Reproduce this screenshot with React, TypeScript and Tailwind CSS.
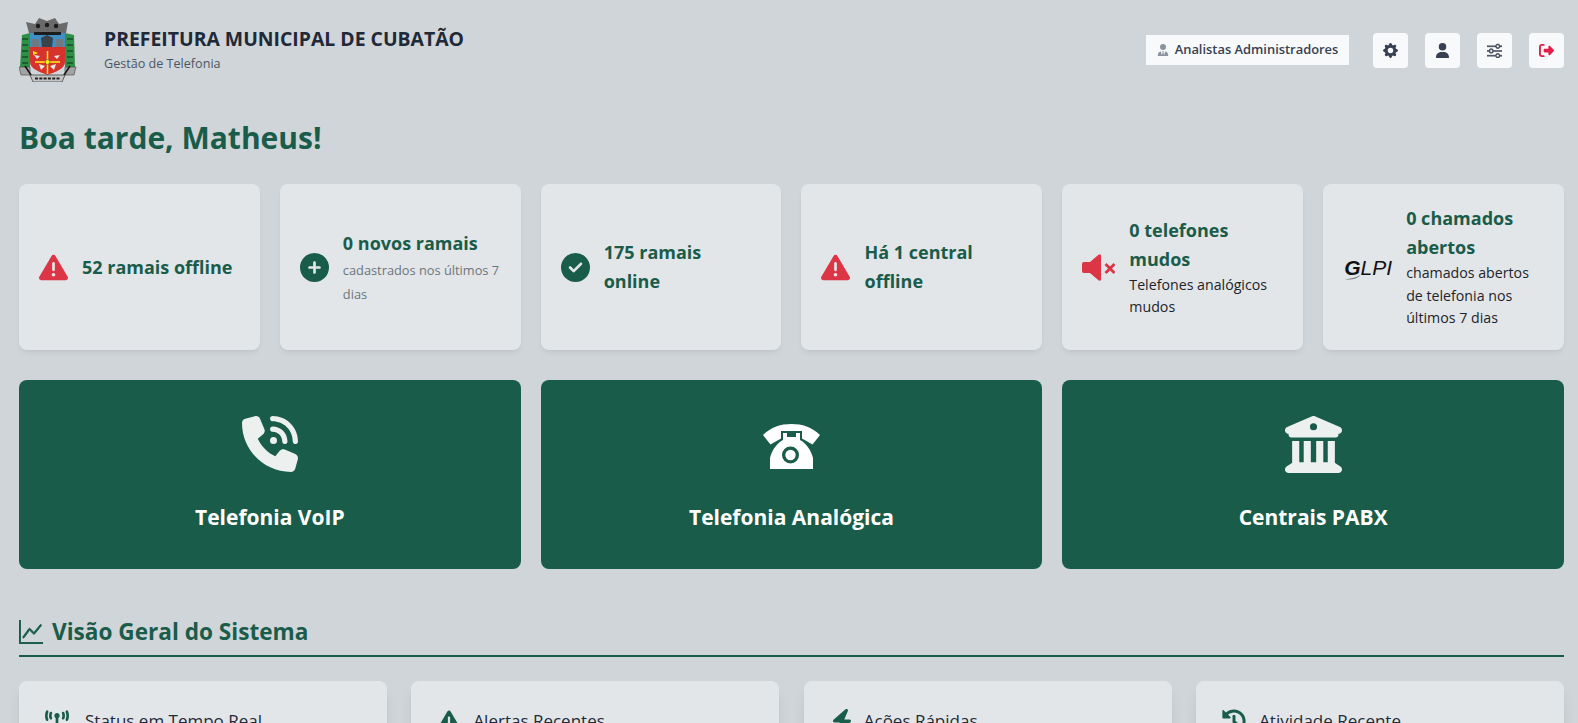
import { FaHistory } from "react-icons/fa";
import {
  FaBolt,
  FaBuildingColumns,
  FaCircleCheck,
  FaCirclePlus,
  FaPhoneVolume,
  FaRightFromBracket,
  FaTowerBroadcast,
  FaTriangleExclamation,
  FaUser,
  FaUserTie,
} from "react-icons/fa6";
import { BsGearFill, BsGraphUp, BsSliders } from "react-icons/bs";

function Brasao() {
  return (
    <svg viewBox="0 0 60 64" className="w-[60px] h-[64px] shrink-0">
      <path d="M10 15 L7 4 L16 6 L20 0 L28 3 L36 0 L40 6 L49 4 L47 15 Z" fill="#6a6a6a" />
      <circle cx="19" cy="8" r="2.200" fill="#1c1c1c" />
      <circle cx="28" cy="7" r="2.200" fill="#1c1c1c" />
      <circle cx="37" cy="8" r="2.200" fill="#1c1c1c" />
      <path d="M3 17 L11 15 L11 49 L1 49 Z" fill="#2f8f46" />
      <path d="M55 17 L46 15 L46 49 L56 49 Z" fill="#2f8f46" />
      <path d="M3 21 L9 21 M3 27 L9 27 M3 33 L9 33 M3 39 L9 39 M3 45 L9 45 M48 21 L54 21 M48 27 L54 27 M48 33 L54 33 M48 39 L54 39 M48 45 L54 45" stroke="#14502a" strokeWidth="1.600" />
      <path d="M11 15 H46 V30 H11 Z" fill="#3f8fc4" />
      <rect x="15" y="14" width="27" height="3" fill="#1c1c1c" />
      <path d="M22 20 L28 17 L34 20 L33 29 L23 29 Z" fill="#39434c" />
      <path d="M13 21 h7 v8 h-7 Z M37 21 h7 v8 h-7 Z" fill="#6d7a82" />
      <path d="M11 29 H46 V44 C46 51 36 54 28.500 57 C21 54 11 51 11 44 Z" fill="#d8322c" />
      <path d="M20 46 l6 2 l-4 4 Z M37 46 l-6 2 l4 4 Z M15 37 l6 1 l-3 3 Z M41 37 l-6 1 l3 3 Z" fill="#e6e6e6" />
      <path d="M28.500 33 V56 M16 44 H41" stroke="#ffef1a" strokeWidth="1.500" />
      <circle cx="28.500" cy="44" r="2.400" fill="#ffef1a" stroke="#222" strokeWidth="0.500" />
      <path d="M14 33 l5 2 l-5 2 Z" fill="#ffef1a" />
      <path d="M0 49 H11 V57 H2 Z M57 49 H46 V57 H55 Z" fill="#a3a3a3" stroke="#444" strokeWidth="0.600" />
      <path d="M6 48 L14 60 M51 48 L43 60" stroke="#111" strokeWidth="1.500" />
      <path d="M11 57 H46 L43 64 H14 Z" fill="#c4c4c4" stroke="#333" strokeWidth="0.700" />
      <path d="M16 60.500 H41" stroke="#222" strokeWidth="2" strokeDasharray="3 1.300" />
    </svg>
  );
}

function Rotary() {
  return (
    <svg viewBox="0 0 57 45" className="w-[57px] h-[45px] mt-[4px]" fill="#ffffff">
      <path d="M0 11 C8 3 18 0 28.500 0 C39 0 49 3 57 11 L49.500 20.500 L39 14.500 V7 H18 V14.500 L7.500 20.500 Z" />
      <path
        fillRule="evenodd"
        d="M20 9 H24 V13 H33 V9 H37 V16 C43 19 48 26 50 34 V45 H7 V34 C9 26 14 19 20 16 Z M27.500 22.500 A8.500 8.500 0 1 0 27.500 39.500 A8.500 8.500 0 1 0 27.500 22.500 Z"
      />
      <circle cx="27.500" cy="31" r="5.200" />
    </svg>
  );
}

function Mudo() {
  return (
    <svg viewBox="0 0 33 27" className="w-[33px] h-[27px] mr-[14px] shrink-0">
      <path d="M0 10 Q0 8 2 8 H8 L16.500 0.800 Q19 -0.800 19 2 V25 Q19 27.800 16.500 26.200 L8 19 H2 Q0 19 0 17 Z" fill="#dc3545" />
      <path d="M23.500 10 L32.500 19 M32.500 10 L23.500 19" stroke="#dc3545" strokeWidth="2.800" />
    </svg>
  );
}

function Glpi() {
  return (
    <div className="relative w-[50px] shrink-0 mr-[13px] text-center font-['Liberation_Sans',sans-serif] italic text-[21px] leading-none text-[#111]">
      <span className="font-bold">G</span>LPI
      <svg viewBox="0 0 24 6" className="absolute left-[1px] top-[18px] w-[20px] h-[5px]">
        <path d="M1 5 C8 5 14 3 20 0 C16 5 8 6 1 5 Z" fill="#777" />
      </svg>
    </div>
  );
}

const stats = [
  { icon: <FaTriangleExclamation className="text-[#dc3545] text-[29px] mr-[14px] shrink-0" />, title: "52 ramais offline" },
  {
    icon: <FaCirclePlus className="text-[#1a5c4a] text-[29px] mr-[14px] shrink-0" />,
    title: "0 novos ramais",
    sub: "cadastrados nos últimos 7 dias",
    subClass: "text-[#6c757d] text-[12.800px] leading-[24px]",
  },
  { icon: <FaCircleCheck className="text-[#1a5c4a] text-[29px] mr-[14px] shrink-0" />, title: "175 ramais online" },
  { icon: <FaTriangleExclamation className="text-[#dc3545] text-[29px] mr-[14px] shrink-0" />, title: "Há 1 central offline" },
  {
    icon: <Mudo />,
    title: "0 telefones mudos",
    sub: "Telefones analógicos mudos",
    subClass: "text-[#212529] text-[14.200px] leading-[22.500px]",
  },
  {
    icon: <Glpi />,
    title: "0 chamados abertos",
    sub: "chamados abertos de telefonia nos últimos 7 dias",
    subClass: "text-[#212529] text-[14.200px] leading-[22.500px]",
  },
];

const modules = [
  { label: "Telefonia VoIP", icon: <FaPhoneVolume className="text-[56px] text-[#ecf0ef]" /> },
  { label: "Telefonia Analógica", icon: <Rotary /> },
  { label: "Centrais PABX", icon: <FaBuildingColumns className="text-[57px] text-[#ecf0ef]" /> },
];

const overview = [
  { label: "Status em Tempo Real", gap: "gap-[16px]", icon: <FaTowerBroadcast className="text-[24px] text-[#1a5c4a]" /> },
  { label: "Alertas Recentes", gap: "gap-[12px]", icon: <FaTriangleExclamation className="text-[24px] text-[#1a5c4a]" /> },
  { label: "Ações Rápidas", gap: "gap-[10px]", icon: <FaBolt className="text-[24px] text-[#1a5c4a]" /> },
  { label: "Atividade Recente", gap: "gap-[13px]", icon: <FaHistory className="text-[24px] text-[#1a5c4a]" /> },
];

function App() {
  return (
    <div className="h-[723px] overflow-hidden bg-[#d0d5d9] pl-[19px] pr-[14px] font-['Open_Sans',sans-serif]">
      <header className="flex items-center justify-between h-[100px]">
        <div className="flex items-center">
          <Brasao />
          <div className="ml-[25px]">
            <h1 className="text-[19.400px] leading-[24px] font-bold text-[#1f2937]">PREFEITURA MUNICIPAL DE CUBATÃO</h1>
            <p className="text-[12.600px] leading-[20px] mt-[3px] text-[#4b5563]">Gestão de Telefonia</p>
          </div>
        </div>
        <div className="flex items-center gap-[17px]">
          <div className="flex items-center gap-[6px] h-[30px] w-[203px] justify-center bg-[#f8f9fb] text-[12.900px] font-semibold text-[#374151] mr-[7px]">
            <FaUserTie className="text-[12px] text-[#8a93a0]" />
            Analistas Administradores
          </div>
          <button className="w-[35px] h-[35px] rounded bg-[#f8f9fb] flex items-center justify-center text-[#374151] text-[15px]">
            <BsGearFill />
          </button>
          <button className="w-[35px] h-[35px] rounded bg-[#f8f9fb] flex items-center justify-center text-[#374151] text-[15px]">
            <FaUser />
          </button>
          <button className="w-[35px] h-[35px] rounded bg-[#f8f9fb] flex items-center justify-center text-[#374151] text-[15px]">
            <BsSliders className="stroke-[0.5]" />
          </button>
          <button className="w-[35px] h-[35px] rounded bg-[#f8f9fb] flex items-center justify-center text-[#e11d48] text-[15px]">
            <FaRightFromBracket />
          </button>
        </div>
      </header>

      <h2 className="text-[30px] leading-[38px] font-bold text-[#1a5c4a] mt-[19px] mb-[27px]">Boa tarde, Matheus!</h2>

      <div className="grid grid-cols-6 gap-[20px] mb-[30px]">
        {stats.map((s) => (
          <div key={s.title} className="h-[166px] rounded-lg bg-[#e2e6e9] shadow-md shadow-black/5 flex items-center px-[20px]">
            {s.icon}
            <div>
              <div className="text-[18px] leading-[29px] font-bold text-[#1a5c4a]">{s.title}</div>
              {s.sub && <div className={s.subClass}>{s.sub}</div>}
            </div>
          </div>
        ))}
      </div>

      <div className="grid grid-cols-3 gap-[20px] mb-[47px]">
        {modules.map((m) => (
          <div key={m.label} className="h-[189px] rounded-lg bg-[#1a5c4a] flex flex-col items-center pt-[34px]">
            <div className="h-[60px] flex items-center">{m.icon}</div>
            <div className="mt-[27px] text-[21px] leading-[32px] font-bold text-white">{m.label}</div>
          </div>
        ))}
      </div>

      <div className="flex items-center gap-[9px] border-b-2 border-[#1a5c4a] pb-[7px] mb-[24px] text-[#1a5c4a]">
        <BsGraphUp className="text-[24px] stroke-[0.6]" />
        <h3 className="text-[22.600px] leading-[32px] font-bold">Visão Geral do Sistema</h3>
      </div>

      <div className="grid grid-cols-4 gap-[24.500px]">
        {overview.map((c) => (
          <div key={c.label} className="h-[200px] rounded-lg bg-[#e2e6e9] shadow-lg shadow-black/10 px-[26px] pt-[27px]">
            <div className={`flex items-center ${c.gap} text-[17px] font-medium text-[#1f2937]`}>
              {c.icon}
              {c.label}
            </div>
          </div>
        ))}
      </div>
    </div>
  );
}

export default App;
